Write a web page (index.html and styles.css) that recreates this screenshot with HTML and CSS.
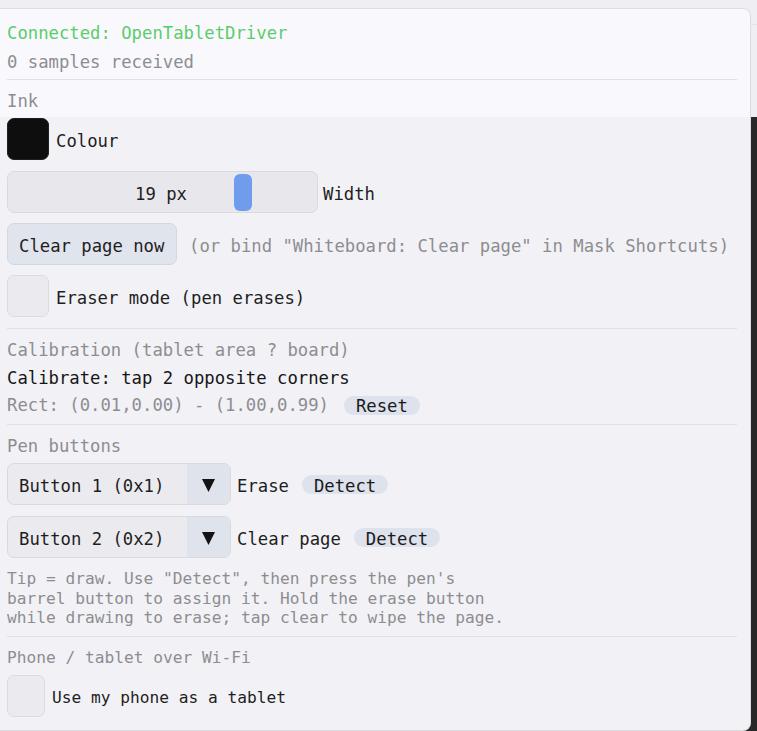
FILE: index.html
```html
<!DOCTYPE html>
<html lang="en">
<head>
<meta charset="utf-8">
<title>Whiteboard tablet</title>
<link rel="stylesheet" href="styles.css">
</head>
<body>
<div class="panel">
  <header class="status">
    <div class="line ok first">Connected: OpenTabletDriver</div>
    <div class="line muted gap9">0 samples received</div>
    <div class="sep sep-head"></div>
    <div class="line muted ink">Ink</div>
  </header>

  <main class="content">
    <div class="row row-colour">
      <span class="swatch"></span>
      <span class="label lbl-near">Colour</span>
    </div>

    <div class="row row-width">
      <div class="slider">
        <span class="slider-value">19 px</span>
        <span class="knob" style="left: 226px"></span>
      </div>
      <span class="label lbl-width">Width</span>
    </div>

    <div class="row row-clear">
      <button class="btn">Clear page now</button>
      <span class="label muted lbl-far">(or bind "Whiteboard: Clear page" in Mask Shortcuts)</span>
    </div>

    <div class="row row-eraser">
      <span class="check"></span>
      <span class="label lbl-near">Eraser mode (pen erases)</span>
    </div>

    <div class="sep sep-a"></div>

    <div class="line muted cal-title">Calibration (tablet area ? board)</div>
    <div class="line dark gap8">Calibrate: tap 2 opposite corners</div>
    <div class="line muted gap8 rect-row">
      <span>Rect: (0.01,0.00) - (1.00,0.99)</span>
      <span class="pill pill-reset">Reset</span>
    </div>

    <div class="sep sep-b"></div>

    <div class="line muted pen-title">Pen buttons</div>

    <div class="row row-combo1">
      <div class="combo">
        <span class="combo-text">Button 1 (0x1)</span>
        <span class="combo-arrow"><svg width="13" height="13" viewBox="0 0 13 13"><polygon points="0,0 13,0 6.5,13" fill="#141414"/></svg></span>
      </div>
      <span class="label lbl-action">Erase</span>
      <span class="pill">Detect</span>
    </div>

    <div class="row row-combo2">
      <div class="combo">
        <span class="combo-text">Button 2 (0x2)</span>
        <span class="combo-arrow"><svg width="13" height="13" viewBox="0 0 13 13"><polygon points="0,0 13,0 6.5,13" fill="#141414"/></svg></span>
      </div>
      <span class="label lbl-action">Clear page</span>
      <span class="pill">Detect</span>
    </div>

    <p class="tip">Tip = draw. Use "Detect", then press the pen's<br>barrel button to assign it. Hold the erase button<br>while drawing to erase; tap clear to wipe the page.</p>

    <div class="sep sep-c"></div>

    <div class="line muted small phone-title">Phone / tablet over Wi-Fi</div>

    <div class="row row-phone">
      <span class="check check-narrow"></span>
      <span class="label small lbl-phone">Use my phone as a tablet</span>
    </div>
  </main>
</div>
</body>
</html>
```

FILE: styles.css
```css
html, body {
  margin: 0;
  padding: 0;
}

body {
  width: 757px;
  height: 731px;
  overflow: hidden;
  font-family: "DejaVu Sans Mono", "Liberation Mono", monospace;
  font-size: 17.25px;
  color: #1e1e1e;
  background:
    linear-gradient(#e3e3e7, #e3e3e7) 0 24px / 100% 1px no-repeat,
    linear-gradient(to bottom, #efeff3 0, #efeff3 117px, #282828 117px, #282828 100%);
}

.panel {
  box-sizing: border-box;
  width: 751px;
  height: 723px;
  margin-top: 8px;
  border: 1px solid #dcdce1;
  border-left: 0;
  border-radius: 0 8px 8px 0;
  background: #f2f2f6;
  overflow: hidden;
  display: flex;
  flex-direction: column;
}

/* connection status strip */
.status {
  box-sizing: border-box;
  height: 108px;
  padding: 13px 13px 0 7px;
  background: #f9f9fd;
}

/* single text lines: 20px slot, glyphs sit 1px low like the widget labels */
.line {
  line-height: 22px;
  height: 20px;
  white-space: pre;
}

.ok { color: #5bcc6b; }
.muted { color: #8d8d91; }
.dark { color: #161616; }

.small { font-size: 16.2px; }

.gap8 { margin-top: 8px; }
.gap9 { margin-top: 9px; }

.sep {
  height: 1px;
  background: #e1e1e5;
}

.sep-head { margin-top: 8px; }
.ink { margin-top: 10px; }

/* settings body */
.content {
  padding: 1px 13px 0 7px;
}

.row {
  display: flex;
  align-items: center;
  height: 42px;
}

.row-width { margin-top: 11px; }
.row-clear { margin-top: 10px; }
.row-eraser { margin-top: 10px; }
.row-combo1 { margin-top: 8px; }
.row-combo2 { margin-top: 11px; }
.row-phone { margin-top: 8px; }

.label {
  white-space: pre;
  padding-top: 4px;
}
.lbl-near { margin-left: 7px; }
.lbl-width { margin-left: 5px; }
.lbl-far { margin-left: 12px; }
.lbl-action { margin-left: 6px; margin-right: 13px; }
.lbl-phone { margin-left: 7px; }

.swatch {
  width: 42px;
  height: 42px;
  box-sizing: border-box;
  border-radius: 7px;
  background: #0e0e0e;
  border: 1px solid #202020;
}

.slider {
  position: relative;
  box-sizing: border-box;
  width: 311px;
  height: 42px;
  border: 1px solid #dadade;
  border-radius: 7px;
  background: #e8e8ec;
  display: flex;
  align-items: center;
  justify-content: center;
}

.slider-value {
  white-space: pre;
  padding: 4px 3px 0 0;
}

.knob {
  position: absolute;
  top: 2px;
  width: 18px;
  height: 37px;
  border-radius: 6px;
  background: #6f9ced;
}

.btn {
  box-sizing: border-box;
  height: 42px;
  width: 170px;
  padding: 3px 0 0 11px;
  text-align: left;
  font: inherit;
  color: #1e1e1e;
  background: #e0e4ed;
  border: 1px solid #d2d7e1;
  border-radius: 7px;
}

.check {
  box-sizing: border-box;
  width: 42px;
  height: 42px;
  border: 1px solid #dbdbdf;
  border-radius: 7px;
  background: #ebebef;
}

.check-narrow { width: 38px; }

.sep-a { margin-top: 11px; }
.cal-title { margin-top: 10px; }

.rect-row {
  display: flex;
  align-items: center;
}

.pill {
  display: inline-flex;
  align-items: center;
  box-sizing: border-box;
  height: 19px;
  padding: 4px 12px 0;
  border-radius: 10px;
  background: #dde2ec;
  color: #1a1a1a;
  line-height: 15px;
}

.rect-row .pill { margin-top: 1px; padding-top: 2px; }
.pill-reset { margin-left: 15px; }

.sep-b { margin-top: 9px; }
.pen-title { margin-top: 10px; }

.combo {
  box-sizing: border-box;
  width: 224px;
  height: 42px;
  display: flex;
  border: 1px solid #dadade;
  border-radius: 7px;
  background: #ebebef;
  overflow: hidden;
}

.combo-text {
  flex: 1;
  display: flex;
  align-items: center;
  padding: 4px 0 0 11px;
  white-space: pre;
}

.combo-arrow {
  width: 43px;
  display: flex;
  align-items: center;
  justify-content: center;
  padding-top: 2px;
  background: #dfe3ec;
}

.tip {
  margin: 10px 0 0;
  font-size: 16.2px;
  line-height: 19.5px;
  padding-top: 1px;
  height: 58.5px;
  color: #8d8d91;
  white-space: pre;
}

.sep-c { margin-top: 8px; }
.phone-title { margin-top: 10px; }
```
